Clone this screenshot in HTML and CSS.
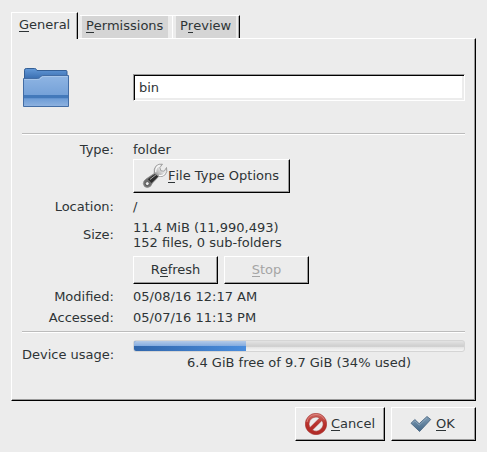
FILE: index.html
```html
<!DOCTYPE html>
<html lang="en">
<head>
<meta charset="utf-8">
<title>File Properties</title>
<link rel="stylesheet" href="styles.css">
</head>
<body>
<main class="dialog">
  <nav class="tabs">
    <div class="tab active"><span><u>G</u>eneral</span></div>
    <div class="tab"><span><u>P</u>ermissions</span></div>
    <div class="tab last"><span>P<u>r</u>eview</span></div>
  </nav>
  <section class="panel raised">
    <header class="name-row">
      <svg class="folder" width="48" height="40" viewBox="0 0 48 40">
        <defs>
          <linearGradient id="back" x1="0" y1="0" x2="0" y2="1"><stop offset="0" stop-color="#6399d8"/><stop offset="1" stop-color="#3468ab"/></linearGradient>
          <linearGradient id="front" x1="0" y1="0" x2="0" y2="1"><stop offset="0" stop-color="#8fb5e3"/><stop offset="1" stop-color="#6696d2"/></linearGradient>
          <linearGradient id="foot" x1="0" y1="0" x2="0" y2="1"><stop offset="0" stop-color="#6d9cd6"/><stop offset="1" stop-color="#8db1df"/></linearGradient>
        </defs>
        <path d="M2.500 12V2.200q0-1.700 1.700-1.700h8.500q1.300 0 1.800 1.200l.4.800h29.100q1 0 1 1V12z" fill="url(#back)" stroke="#345f96"/>
        <path d="M1.500 10.500h14q1.800 0 2.800-1.500t2.500-1.500h25.700v31h-45z" fill="url(#front)" stroke="#436da5"/>
        <path d="M2 27h44v3.500H2z" fill="#4379ba"/>
        <path d="M2 30.500h44v7.500H2z" fill="url(#foot)"/>
        <path d="M2 11.500h14q2 0 3-1.500t2.500-1.500h24" fill="none" stroke="#a6c5ea"/>
      </svg>
      <input class="entry" type="text" value="bin" aria-label="Name">
    </header>
    <hr>
    <dl class="facts">
      <dt>Type:</dt><dd>folder</dd>
      <dd class="wide"><button class="raised options" type="button">
        <svg width="26" height="26" viewBox="0 0 26 26">
          <defs><linearGradient id="metal" x1="0" y1="1" x2="1" y2="0"><stop offset="0" stop-color="#777"/><stop offset=".45" stop-color="#666"/><stop offset=".62" stop-color="#bbb"/><stop offset=".8" stop-color="#eee"/><stop offset="1" stop-color="#999"/></linearGradient></defs>
          <path d="M1.300 20.500q0-2.700 2.700-4.500l8.200-5.500q-.8-5 2-7.700 2.500-2.300 6.300-1.600l-2.600 3.300 1 3.300 3.300.4 2.300-3.700q1.400 4.300-1.300 7.200-2.500 2.500-6.500 1.800L10.500 20q-1.700 4.500-5.200 4.500t-4-4z" fill="url(#metal)" stroke="#888" stroke-width=".7"/>
          <path d="M6 16.300l7-5.300 3.300 2.500L9.500 20z" fill="#2e2e2e"/>
          <path d="M8 16.500l6-4.700" stroke="#aaa"/>
          <path d="M13.700 9.300q-.3-5.500 4-6.800M17 12.300q4 1 5.700-2" fill="none" stroke="#fafafa" stroke-width="1.200"/>
          <circle cx="5.300" cy="20.600" r="2" fill="#ececec" stroke="#555"/>
        </svg><span><u>F</u>ile Type Options</span></button></dd>
      <dt>Location:</dt><dd>/</dd>
      <dt class="size">Size:</dt><dd>11.4 MiB (11,990,493)<br>152 files, 0 sub-folders</dd>
      <dd class="wide scan-buttons">
        <button class="raised" type="button"><span>R<u>e</u>fresh</span></button>
        <button class="raised" type="button" disabled><span><u>S</u>top</span></button>
      </dd>
      <dt>Modified:</dt><dd>05/08/16 12:17 AM</dd>
      <dt>Accessed:</dt><dd>05/07/16 11:13 PM</dd>
    </dl>
    <hr>
    <div class="usage">
      <span class="usage-label">Device usage:</span>
      <div class="meter">
        <div class="track"><div class="fill" style="width:34%"></div></div>
        <div class="meter-text">6.4 GiB free of 9.7 GiB (34% used)</div>
      </div>
    </div>
  </section>
  <footer class="actions">
    <button class="raised cancel" type="button">
      <svg width="22" height="22" viewBox="0 0 22 22">
        <defs><linearGradient id="red" x1="0" y1="0" x2="0" y2="1"><stop offset="0" stop-color="#cf6b65"/><stop offset=".5" stop-color="#b9302b"/><stop offset="1" stop-color="#b02a26"/></linearGradient></defs>
        <path fill-rule="evenodd" d="M11 .3a10.700 10.700 0 1 0 0 21.400a10.700 10.700 0 1 0 0-21.400zM11 4a7 7 0 0 1 3.600 1L5 14.600A7 7 0 0 1 11 4zM17 7.400A7 7 0 0 1 7.400 17z" fill="url(#red)" stroke="#a53632" stroke-width=".6"/>
        <path d="M2 9Q3 2 11 1.500q6 0 8.300 5" fill="none" stroke="#df8d87" stroke-width=".8"/>
      </svg><span><u>C</u>ancel</span></button>
    <button class="raised ok" type="button">
      <svg width="22" height="18" viewBox="0 0 22 18">
        <defs><linearGradient id="steel" x1="0" y1="0" x2="0" y2="1"><stop offset="0" stop-color="#7f9cb5"/><stop offset="1" stop-color="#456888"/></linearGradient></defs>
        <path d="M1 8.300l3.800-3.800 4.400 4.200L17 1.500 20.700 4.500 9.600 16.500z" fill="url(#steel)" stroke="#4b6883" stroke-width=".9" stroke-linejoin="round"/>
        <path d="M2.300 8.300l2.500-2.500 4.400 4.200 7.800-7.200" fill="none" stroke="#9ab0c4" stroke-width=".7"/>
      </svg><span><u>O</u>K</span></button>
  </footer>
</main>
</body>
</html>
```

FILE: styles.css
```css
* { box-sizing: border-box; }
body {
  margin: 0;
  background: #ececec;
  color: #2e3436;
  font: 13px/15px "DejaVu Sans", sans-serif;
}
.dialog { width: 487px; height: 452px; padding: 12px 11px 0; }
u {
  display: inline-block;
  height: 15px;
  vertical-align: top;
  text-decoration: none;
  box-shadow: inset 0 -1px #2e3436;
}
.raised {
  background: #ececec;
  border: 1px solid;
  border-color: #fff #000 #000 #fff;
  box-shadow: inset -1px -1px #9a9a9a;
}

.tabs { display: flex; align-items: flex-end; height: 26px; }
.tab {
  height: 23px;
  width: 92px;
  padding: 0 4px 0 2px;
  margin-left: 2px;
  border-top: 1px solid #fff;
}
.tab span { display: block; height: 22px; padding: 2px 0 0 4px; background: #d5d5d5; }
.tab.active {
  position: relative;
  height: 27px;
  width: 67px;
  margin: 0 0 -1px;
  padding: 0;
  background: #ececec;
  border: solid;
  border-width: 1px 1px 0;
  border-color: #fff #000 #000 #fff;
  box-shadow: inset -1px 0 #aaa;
}
.tab.active span { background: none; padding: 4px 0 0 7px; }
.tab.last {
  width: 68px;
  margin-left: 0;
  padding: 0 3px;
  border-left: 1px solid #fff;
  border-right: 1px solid #000;
  box-shadow: inset -1px 0 #aaa;
}

.panel { height: 363px; padding: 0 10px; }
.name-row { display: flex; height: 94px; }
.folder { margin: 29px 63px 0 0; }
.entry {
  width: 332px;
  height: 27px;
  margin-top: 35px;
  padding: 0 5px;
  border: 1px solid;
  border-color: #999 #fff #fff #999;
  box-shadow: inset 1px 1px #000, inset -2px -2px #ececec;
  border-radius: 0;
  outline: 0;
  background: #fff;
  color: inherit;
  font: inherit;
}
hr { height: 2px; margin: 0; border: 0; border-top: 1px solid #bcbcbc; border-bottom: 1px solid #fff; }

.facts {
  display: grid;
  grid-template: 17px 40px 21px 36px 33px 21px 20px / 92px 1fr;
  column-gap: 19px;
  height: 196px;
  margin: 0;
  padding-top: 7px;
}
dt { text-align: right; }
dt.size { padding-top: 7px; }
dd { margin: 0; white-space: nowrap; }
.wide { grid-column: 2; }
button {
  display: flex;
  align-items: center;
  justify-content: center;
  width: 85px;
  height: 28px;
  padding: 0;
  border-radius: 0;
  color: inherit;
  font: inherit;
}
button span { height: 16px; }
button:disabled { color: #a5a5a5; }
button:disabled u { box-shadow: inset 0 -1px #a5a5a5; }
.options { width: 157px; height: 34px; padding-right: 2px; }
.scan-buttons { display: flex; gap: 6px; }

.usage { display: grid; grid-template-columns: 92px 332px; column-gap: 19px; }
.usage-label { padding-top: 14px; white-space: nowrap; text-align: right; }
.meter { padding-top: 7px; }
.track {
  height: 12px;
  overflow: hidden;
  border: 1px solid #d5d5d5;
  border-radius: 3px;
  background: linear-gradient(#e3e3e3, #cfcfcf 50%, #c8c8c8 51%, #e7e7e7 66%, #f5f5f5);
}
.fill {
  height: 100%;
  background: linear-gradient(#b3cae8, #85ace0 49%, transparent 50%), linear-gradient(90deg, #3166ab, #4a8ddd);
}
.meter-text { margin-top: 3px; text-align: center; }

.actions { display: flex; justify-content: flex-end; gap: 6px; padding-top: 6px; }
.actions button { height: 34px; }
.actions .cancel { width: 90px; gap: 4px; }
.actions .ok { gap: 4px; padding-right: 2px; }
```
